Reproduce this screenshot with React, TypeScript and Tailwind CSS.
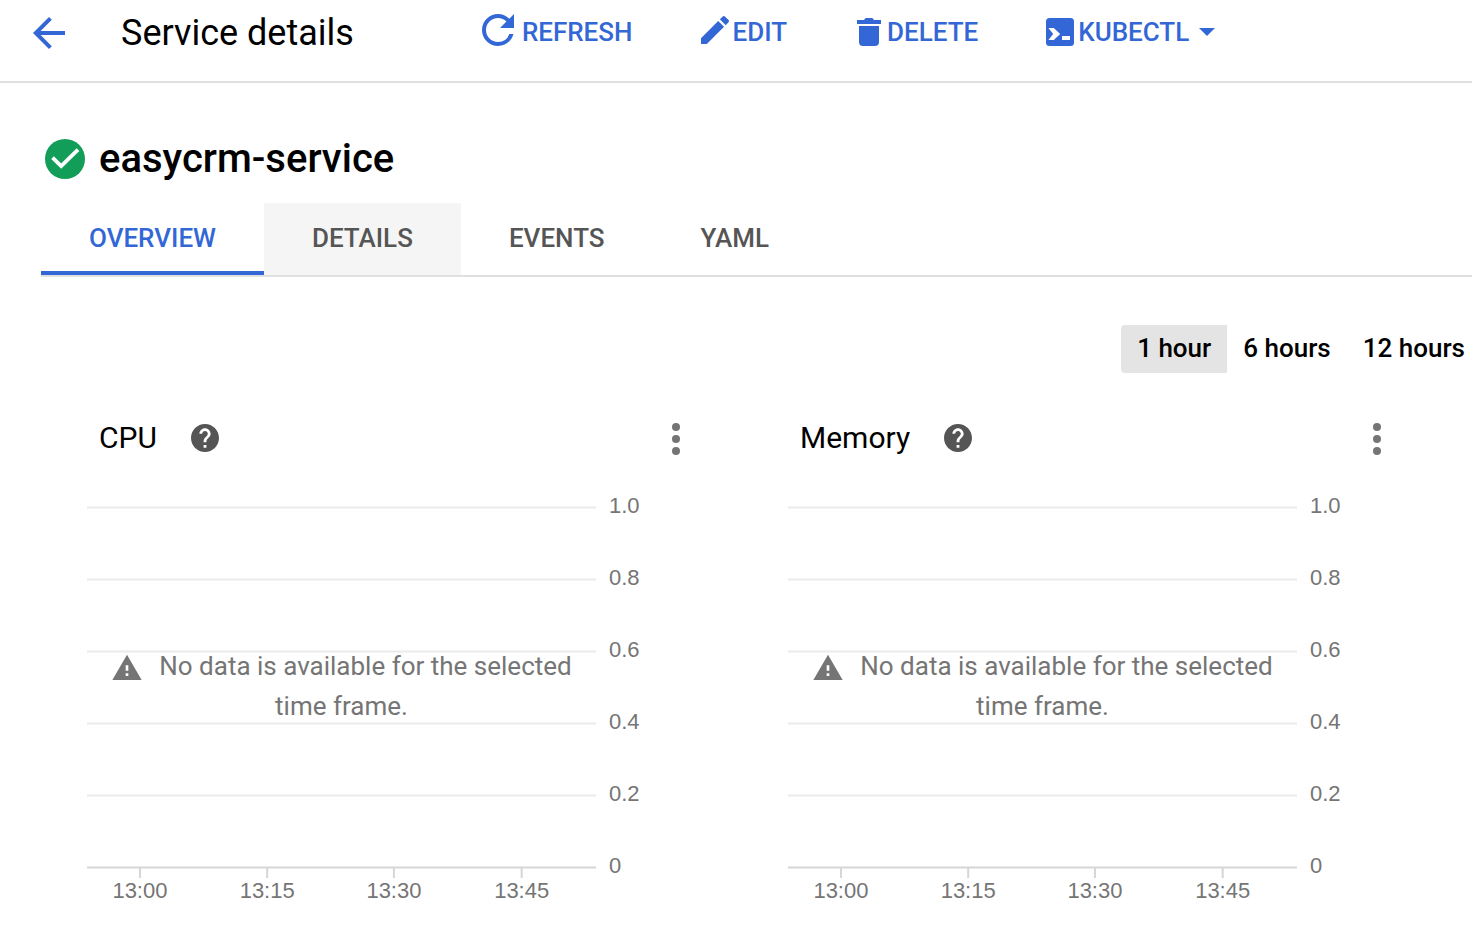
import { useState } from "react";
import type { ReactNode } from "react";

function BackIcon() {
  return (
    <svg className="size-8" viewBox="4 4 16 16" fill="currentColor" aria-hidden="true">
      <path d="M20 11H7.83l5.59-5.59L12 4l-8 8 8 8 1.41-1.41L7.83 13H20v-2z" />
    </svg>
  );
}

function RefreshIcon() {
  return (
    <svg className="h-9 w-12" viewBox="0 0 48 36" fill="currentColor" aria-hidden="true">
      <path
        transform="scale(2) translate(0 -4)"
        d="M17.65 6.35A7.958 7.958 0 0 0 12 4c-4.42 0-7.99 3.58-7.99 8s3.57 8 7.99 8c3.73 0 6.84-2.55 7.73-6h-2.08A5.99 5.99 0 0 1 12 18c-3.31 0-6-2.69-6-6s2.69-6 6-6c1.66 0 3.14.69 4.22 1.78L13 11h7V4l-2.35 2.35z"
      />
    </svg>
  );
}

function EditIcon() {
  return (
    <svg className="size-9" viewBox="0 0 36 36" fill="currentColor" aria-hidden="true">
      <path
        transform="translate(4 2) scale(1.5556) translate(-3 -3)"
        d="M3 17.25V21h3.75L17.81 9.94l-3.75-3.75L3 17.25zM20.71 7.04a.996.996 0 0 0 0-1.41l-2.34-2.34a.996.996 0 0 0-1.41 0l-1.83 1.83 3.75 3.75 1.83-1.83z"
      />
    </svg>
  );
}

function DeleteIcon() {
  return (
    <svg className="size-9" viewBox="0 0 36 36" fill="currentColor" aria-hidden="true">
      <path d="M6 6h7l1.6-2h6.8L23 6h7v4H6zM8 12h20v16a4 4 0 0 1-4 4H12a4 4 0 0 1-4-4z" />
    </svg>
  );
}

function TerminalIcon() {
  return (
    <svg className="size-9" viewBox="0 0 36 36" aria-hidden="true">
      <rect x="4" y="4" width="28" height="28" rx="3.5" fill="currentColor" />
      <path d="M6.4 14h5.4l6.4 6-6.4 6H6.4l4.8-6zM20 22h8v4h-8z" fill="#fff" />
    </svg>
  );
}

function HelpIcon() {
  return (
    <svg className="size-7" viewBox="2 2 20 20" fill="currentColor" aria-hidden="true">
      <path d="M12 2C6.48 2 2 6.48 2 12s4.48 10 10 10 10-4.48 10-10S17.52 2 12 2zm1 17h-2v-2h2v2zm2.07-7.75-.9.92C13.45 12.9 13 13.5 13 15h-2v-.5c0-1.1.45-2.1 1.17-2.83l1.24-1.26c.37-.36.59-.86.59-1.41 0-1.1-.9-2-2-2s-2 .9-2 2H8c0-2.21 1.79-4 4-4s4 1.79 4 4c0 .88-.36 1.68-.93 2.25z" />
    </svg>
  );
}

function MoreIcon() {
  return (
    <svg className="size-8" viewBox="4 4 16 16" fill="currentColor" aria-hidden="true">
      <circle cx="12" cy="6" r="2" />
      <circle cx="12" cy="12" r="2" />
      <circle cx="12" cy="18" r="2" />
    </svg>
  );
}

function WarningIcon() {
  return (
    <svg className="mr-4 inline-block size-8 align-middle" viewBox="0 0 24 24" fill="currentColor" aria-hidden="true">
      <path d="M1 21h22L12 2 1 21zm12-3h-2v-2h2v2zm0-4h-2v-4h2v4z" />
    </svg>
  );
}

function ToolbarButton({ icon, children }: { icon: ReactNode; children: ReactNode }) {
  return (
    <button type="button" className="flex cursor-pointer items-center text-[26px] leading-8 font-medium">
      {icon}
      {children}
    </button>
  );
}

const yLabels = ["1.0", "0.8", "0.6", "0.4", "0.2", "0"];
const xTicks = [
  { label: "13:00", at: "10.4%" },
  { label: "13:15", at: "35.4%" },
  { label: "13:30", at: "60.3%" },
  { label: "13:45", at: "85.4%" },
];

function MetricChart({ title }: { title: string }) {
  return (
    <section className="min-w-0">
      <div className="flex h-12 items-center justify-between pl-3">
        <div className="flex items-center gap-[34px] pb-0.5">
          <h2 className="text-[30px] leading-10">{title}</h2>
          <button type="button" aria-label={`About ${title}`} className="cursor-pointer text-[#555]">
            <HelpIcon />
          </button>
        </div>
        <button
          type="button"
          aria-label={`${title} options`}
          className="flex size-12 cursor-pointer items-center justify-center text-[#757575]"
        >
          <MoreIcon />
        </button>
      </div>
      <div className="relative mt-[43px] mr-[104px]">
        <svg
          className="block h-[400px] w-full overflow-visible font-['Liberation_Sans',Arial,sans-serif] text-[22px]"
          role="img"
          aria-label={`${title} chart`}
        >
          {yLabels.map((label, i) => (
            <g key={label}>
              <line
                x1="0"
                x2="100%"
                y1={1.5 + i * 72}
                y2={1.5 + i * 72}
                strokeWidth="2"
                stroke={i === yLabels.length - 1 ? "#d6d6d6" : "#ebebeb"}
              />
              <text x="100%" dx="13" y={7 + i * 72} fill="#757575">
                {label}
              </text>
            </g>
          ))}
          {xTicks.map((tick) => (
            <g key={tick.label}>
              <line x1={tick.at} x2={tick.at} y1="362" y2="372" stroke="#d6d6d6" strokeWidth="2" />
              <text x={tick.at} y="392" textAnchor="middle" fill="#757575">
                {tick.label}
              </text>
            </g>
          ))}
        </svg>
        <p className="absolute inset-x-0 top-[140px] px-6 text-center text-[26px] leading-10 text-[#757575]">
          <WarningIcon />
          No data is available for the selected time frame.
        </p>
      </div>
    </section>
  );
}

const tabs = ["OVERVIEW", "DETAILS", "EVENTS", "YAML"];
const ranges = ["1 hour", "6 hours", "12 hours"];

export default function App() {
  const [tab, setTab] = useState("OVERVIEW");
  const [range, setRange] = useState("1 hour");

  return (
    <div className="min-h-screen overflow-x-hidden bg-white font-[Roboto,sans-serif] text-black">
      <header className="flex items-center border-b-2 border-[#e0e0e0] pt-2 pb-6 pl-[33px]">
        <a href="#services" aria-label="Back" className="text-[#3367d6]">
          <BackIcon />
        </a>
        <h1 className="ml-14 pt-0.5 text-[36px] leading-[47px]">Service details</h1>
        <div className="ml-30 flex items-center gap-16 pb-0.5 text-[#3367d6]">
          <ToolbarButton icon={<RefreshIcon />}>REFRESH</ToolbarButton>
          <ToolbarButton icon={<EditIcon />}>EDIT</ToolbarButton>
          <ToolbarButton icon={<DeleteIcon />}>DELETE</ToolbarButton>
          <ToolbarButton icon={<TerminalIcon />}>
            KUBECTL
            <svg className="ml-2.5 h-2 w-4" viewBox="0 0 16 8" fill="currentColor" aria-hidden="true">
              <path d="M0 0h16L8 8z" />
            </svg>
          </ToolbarButton>
        </div>
      </header>

      <main>
        <div className="flex items-center gap-3.5 pt-[52px] pl-[45px]">
          <svg className="size-10" viewBox="0 0 40 40" role="img" aria-label="Healthy">
            <circle cx="20" cy="20" r="20" fill="#129e59" />
            <path d="M7.5 18.6l8.7 8.6L33 10.6" fill="none" stroke="#fff" strokeWidth="3.8" />
          </svg>
          <h2 className="text-[40px] leading-12 font-medium">easycrm-service</h2>
        </div>

        <nav className="mt-5 ml-[41px] flex border-b-2 border-[#e0e0e0]" role="tablist">
          {tabs.map((name) => (
            <button
              key={name}
              type="button"
              role="tab"
              aria-selected={tab === name}
              onClick={() => setTab(name)}
              className={`h-[72px] cursor-pointer border-b-4 px-12 pt-0.5 text-[26px] leading-8 font-medium ${
                tab === name ? "border-[#3367d6] text-[#3367d6]" : "border-transparent text-[#555]"
              } ${name === "DETAILS" ? "bg-[#f5f5f5]" : ""}`}
            >
              {name}
            </button>
          ))}
        </nav>

        <div className="mt-12 flex justify-end pr-[7px]">
          {ranges.map((name) => (
            <button
              key={name}
              type="button"
              aria-pressed={range === name}
              onClick={() => setRange(name)}
              className={`h-12 cursor-pointer rounded-l-sm pb-0.5 pl-4 text-[26px] leading-8 font-medium ${
                name === "12 hours" ? "pr-0" : "pr-4"
              } ${range === name ? "bg-[#e4e4e4]" : ""}`}
            >
              {name}
            </button>
          ))}
        </div>

        <div className="mt-[42px] grid grid-cols-2 gap-[88px] pr-[71px] pb-10 pl-[87px]">
          <MetricChart title="CPU" />
          <MetricChart title="Memory" />
        </div>
      </main>
    </div>
  );
}
